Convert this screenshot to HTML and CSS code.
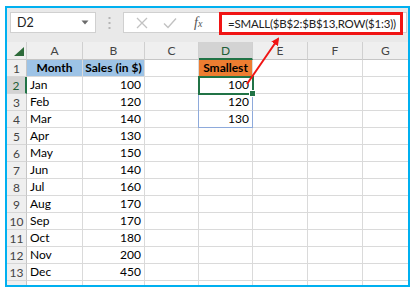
FILE: index.html
```html
<!DOCTYPE html>
<html lang="en">
<head>
    <meta charset="UTF-8">
    <meta name="viewport" content="width=device-width, initial-scale=1.0">
    <title>SMALL with ROW</title>
    <link rel="stylesheet" href="styles.css">
</head>
<body>
    <div class="frame">
        <div class="toolbar">
            <div class="namebox">
                <span>D2</span>
                <svg class="drop" width="8" height="5" viewBox="0 0 8 5"><path d="M0.5 0.5 L7.5 0.5 L4 4.5 Z" fill="#6b6b6b"/></svg>
            </div>
            <div class="grip">
                <svg width="3" height="12" viewBox="0 0 3 12"><rect x="0.5" y="0" width="2" height="2" fill="#b5b5b5"/><rect x="0.5" y="5" width="2" height="2" fill="#b5b5b5"/><rect x="0.5" y="10" width="2" height="2" fill="#b5b5b5"/></svg>
            </div>
            <div class="formula">
                <div class="buttons">
                    <svg width="12" height="12" viewBox="0 0 12 12"><path d="M1 1 L11 11 M11 1 L1 11" stroke="#c2c2c2" stroke-width="1.3" fill="none"/></svg>
                    <svg width="14" height="12" viewBox="0 0 14 12"><path d="M1 6.5 L5 10.5 L13 1.5" stroke="#c2c2c2" stroke-width="1.4" fill="none"/></svg>
                    <span class="fx">f<small>x</small></span>
                </div>
                <div class="input">=SMALL($B$2:$B$13,ROW($1:3))</div>
            </div>
        </div>

        <div class="sheet">
            <div class="hd corner"><svg width="10" height="9" viewBox="0 0 10 9"><path d="M10 0 L10 9 L0 9 Z" fill="#2e6b3a"/></svg></div>
            <div class="hd">A</div>
            <div class="hd">B</div>
            <div class="hd">C</div>
            <div class="hd active-col">D</div>
            <div class="hd">E</div>
            <div class="hd">F</div>
            <div class="hd last">G</div>

            <div class="rh">1</div>
            <div class="c title">Month</div>
            <div class="c title">Sales (in $)</div>
            <div class="c"></div>
            <div class="c orange">Smallest</div>
            <div class="c"></div><div class="c"></div><div class="c last"></div>

            <div class="rh active-row">2</div>
            <div class="c">Jan</div><div class="c num">100</div><div class="c"></div>
            <div class="c num current">100</div>
            <div class="c"></div><div class="c"></div><div class="c last"></div>

            <div class="rh">3</div>
            <div class="c">Feb</div><div class="c num">120</div><div class="c"></div>
            <div class="c num range">120</div>
            <div class="c"></div><div class="c"></div><div class="c last"></div>

            <div class="rh">4</div>
            <div class="c">Mar</div><div class="c num">140</div><div class="c"></div>
            <div class="c num range range-end">130</div>
            <div class="c"></div><div class="c"></div><div class="c last"></div>

            <div class="rh">5</div>
            <div class="c">Apr</div><div class="c num">130</div><div class="c"></div><div class="c"></div><div class="c"></div><div class="c"></div><div class="c last"></div>
            <div class="rh">6</div>
            <div class="c">May</div><div class="c num">150</div><div class="c"></div><div class="c"></div><div class="c"></div><div class="c"></div><div class="c last"></div>
            <div class="rh">7</div>
            <div class="c">Jun</div><div class="c num">140</div><div class="c"></div><div class="c"></div><div class="c"></div><div class="c"></div><div class="c last"></div>
            <div class="rh">8</div>
            <div class="c">Jul</div><div class="c num">160</div><div class="c"></div><div class="c"></div><div class="c"></div><div class="c"></div><div class="c last"></div>
            <div class="rh">9</div>
            <div class="c">Aug</div><div class="c num">170</div><div class="c"></div><div class="c"></div><div class="c"></div><div class="c"></div><div class="c last"></div>
            <div class="rh">10</div>
            <div class="c">Sep</div><div class="c num">170</div><div class="c"></div><div class="c"></div><div class="c"></div><div class="c"></div><div class="c last"></div>
            <div class="rh">11</div>
            <div class="c">Oct</div><div class="c num">180</div><div class="c"></div><div class="c"></div><div class="c"></div><div class="c"></div><div class="c last"></div>
            <div class="rh">12</div>
            <div class="c">Nov</div><div class="c num">200</div><div class="c"></div><div class="c"></div><div class="c"></div><div class="c"></div><div class="c last"></div>
            <div class="rh">13</div>
            <div class="c">Dec</div><div class="c num">450</div><div class="c"></div><div class="c"></div><div class="c"></div><div class="c"></div><div class="c last"></div>
            <div class="rh"></div>
            <div class="c"></div><div class="c"></div><div class="c"></div><div class="c"></div><div class="c"></div><div class="c"></div><div class="c last"></div>
        </div>
    </div>

    <!-- annotation arrow from D2 to the formula -->
    <svg class="pointer" width="416" height="294" viewBox="0 0 416 294">
        <defs>
            <marker id="head" markerWidth="8" markerHeight="8" refX="6" refY="4" orient="auto" markerUnits="userSpaceOnUse">
                <path d="M0 0 L8 4 L0 8 Z" fill="#f01414"/>
            </marker>
        </defs>
        <line x1="247" y1="84" x2="278" y2="39" stroke="#f01414" stroke-width="2" marker-end="url(#head)"/>
    </svg>
</body>
</html>
```

FILE: styles.css
```css
body {
    margin: 0;
    background: #fff;
    font-family: Lato, "Liberation Sans", sans-serif;
    font-size: 12px;
    color: #000;
    position: relative;
    width: 416px;
    height: 294px;
    overflow: hidden;
}

.frame {
    box-sizing: border-box;
    width: 405px;
    height: 281px;
    margin: 6px 0 0 5px;
    border: 2px solid #00b0f0;
    overflow: hidden;
    background: #e9e9e9;
}

.toolbar {
    display: flex;
    align-items: flex-start;
    height: 34px;
    padding: 4px 0 0 3px;
    box-sizing: border-box;
}

.namebox {
    box-sizing: border-box;
    width: 86px;
    height: 21px;
    background: #fff;
    border: 1px solid #d0d0d0;
    display: flex;
    align-items: center;
    justify-content: space-between;
    padding: 0 6px 0 6px;
    color: #222;
    font-size: 12.5px;
}

.grip {
    width: 27px;
    height: 21px;
    display: flex;
    align-items: center;
    justify-content: center;
}

.formula {
    box-sizing: border-box;
    width: 284px;
    height: 21px;
    background: #fff;
    border: 1px solid #d0d0d0;
    display: flex;
    align-items: flex-start;
}

.buttons {
    width: 95px;
    height: 19px;
    display: flex;
    align-items: center;
    gap: 15px;
    padding-left: 12px;
    box-sizing: border-box;
}

.fx {
    font-family: "Liberation Serif", serif;
    font-style: italic;
    font-size: 14px;
    color: #555;
    margin-left: 2px;
}

.fx small {
    font-size: 10px;
}

.input {
    box-sizing: border-box;
    width: 184px;
    height: 23px;
    margin-top: -1px;
    border: 3px solid #f01414;
    padding-left: 6px;
    line-height: 17px;
    font-size: 11.5px;
    letter-spacing: -0.2px;
    color: #222;
    white-space: nowrap;
}

.sheet {
    display: grid;
    grid-template-columns: 20px 56px 62px 54px 54px 55px 55px 45px;
    grid-template-rows: 18px;
    grid-auto-rows: 17px;
    background: #fff;
}

.hd {
    box-sizing: border-box;
    background: #efefef;
    border-right: 1px solid #d0d0d0;
    border-bottom: 1px solid #c6c6c6;
    color: #444;
    display: flex;
    align-items: center;
    justify-content: center;
}

.corner {
    align-items: flex-end;
    justify-content: flex-end;
    padding: 0 2px 3px 0;
}

.active-col {
    background: #d3d3d3;
    border-bottom: 2px solid #217346;
    color: #1e5e36;
}

.rh {
    box-sizing: border-box;
    background: #efefef;
    border-right: 1px solid #c6c6c6;
    border-bottom: 1px solid #d6d6d6;
    color: #444;
    display: flex;
    align-items: center;
    justify-content: center;
}

.active-row {
    background: #d3d3d3;
    border-right: 2px solid #217346;
    color: #1e5e36;
}

.c {
    box-sizing: border-box;
    border-right: 1px solid #dadada;
    border-bottom: 1px solid #dadada;
    padding: 0 3px;
    line-height: 16px;
    white-space: nowrap;
}

.last {
    border-right: none;
}

.num {
    text-align: right;
}

.title {
    background: #9dc3e6;
    font-weight: bold;
    text-align: center;
    padding: 0;
}

.orange {
    background: #ed7d31;
    font-weight: bold;
    text-align: center;
    padding: 0;
}

.current {
    position: relative;
    outline: 2px solid #217346;
    outline-offset: -1px;
}

.current::after {
    content: "";
    position: absolute;
    right: -4px;
    bottom: -4px;
    width: 5px;
    height: 5px;
    background: #217346;
    border: 1px solid #fff;
}

.range {
    border-right-color: #8eaadb;
    box-shadow: -1px 0 0 #8eaadb;
}

.range-end {
    border-bottom-color: #8eaadb;
}

.pointer {
    position: absolute;
    top: 0;
    left: 0;
    pointer-events: none;
}
```
